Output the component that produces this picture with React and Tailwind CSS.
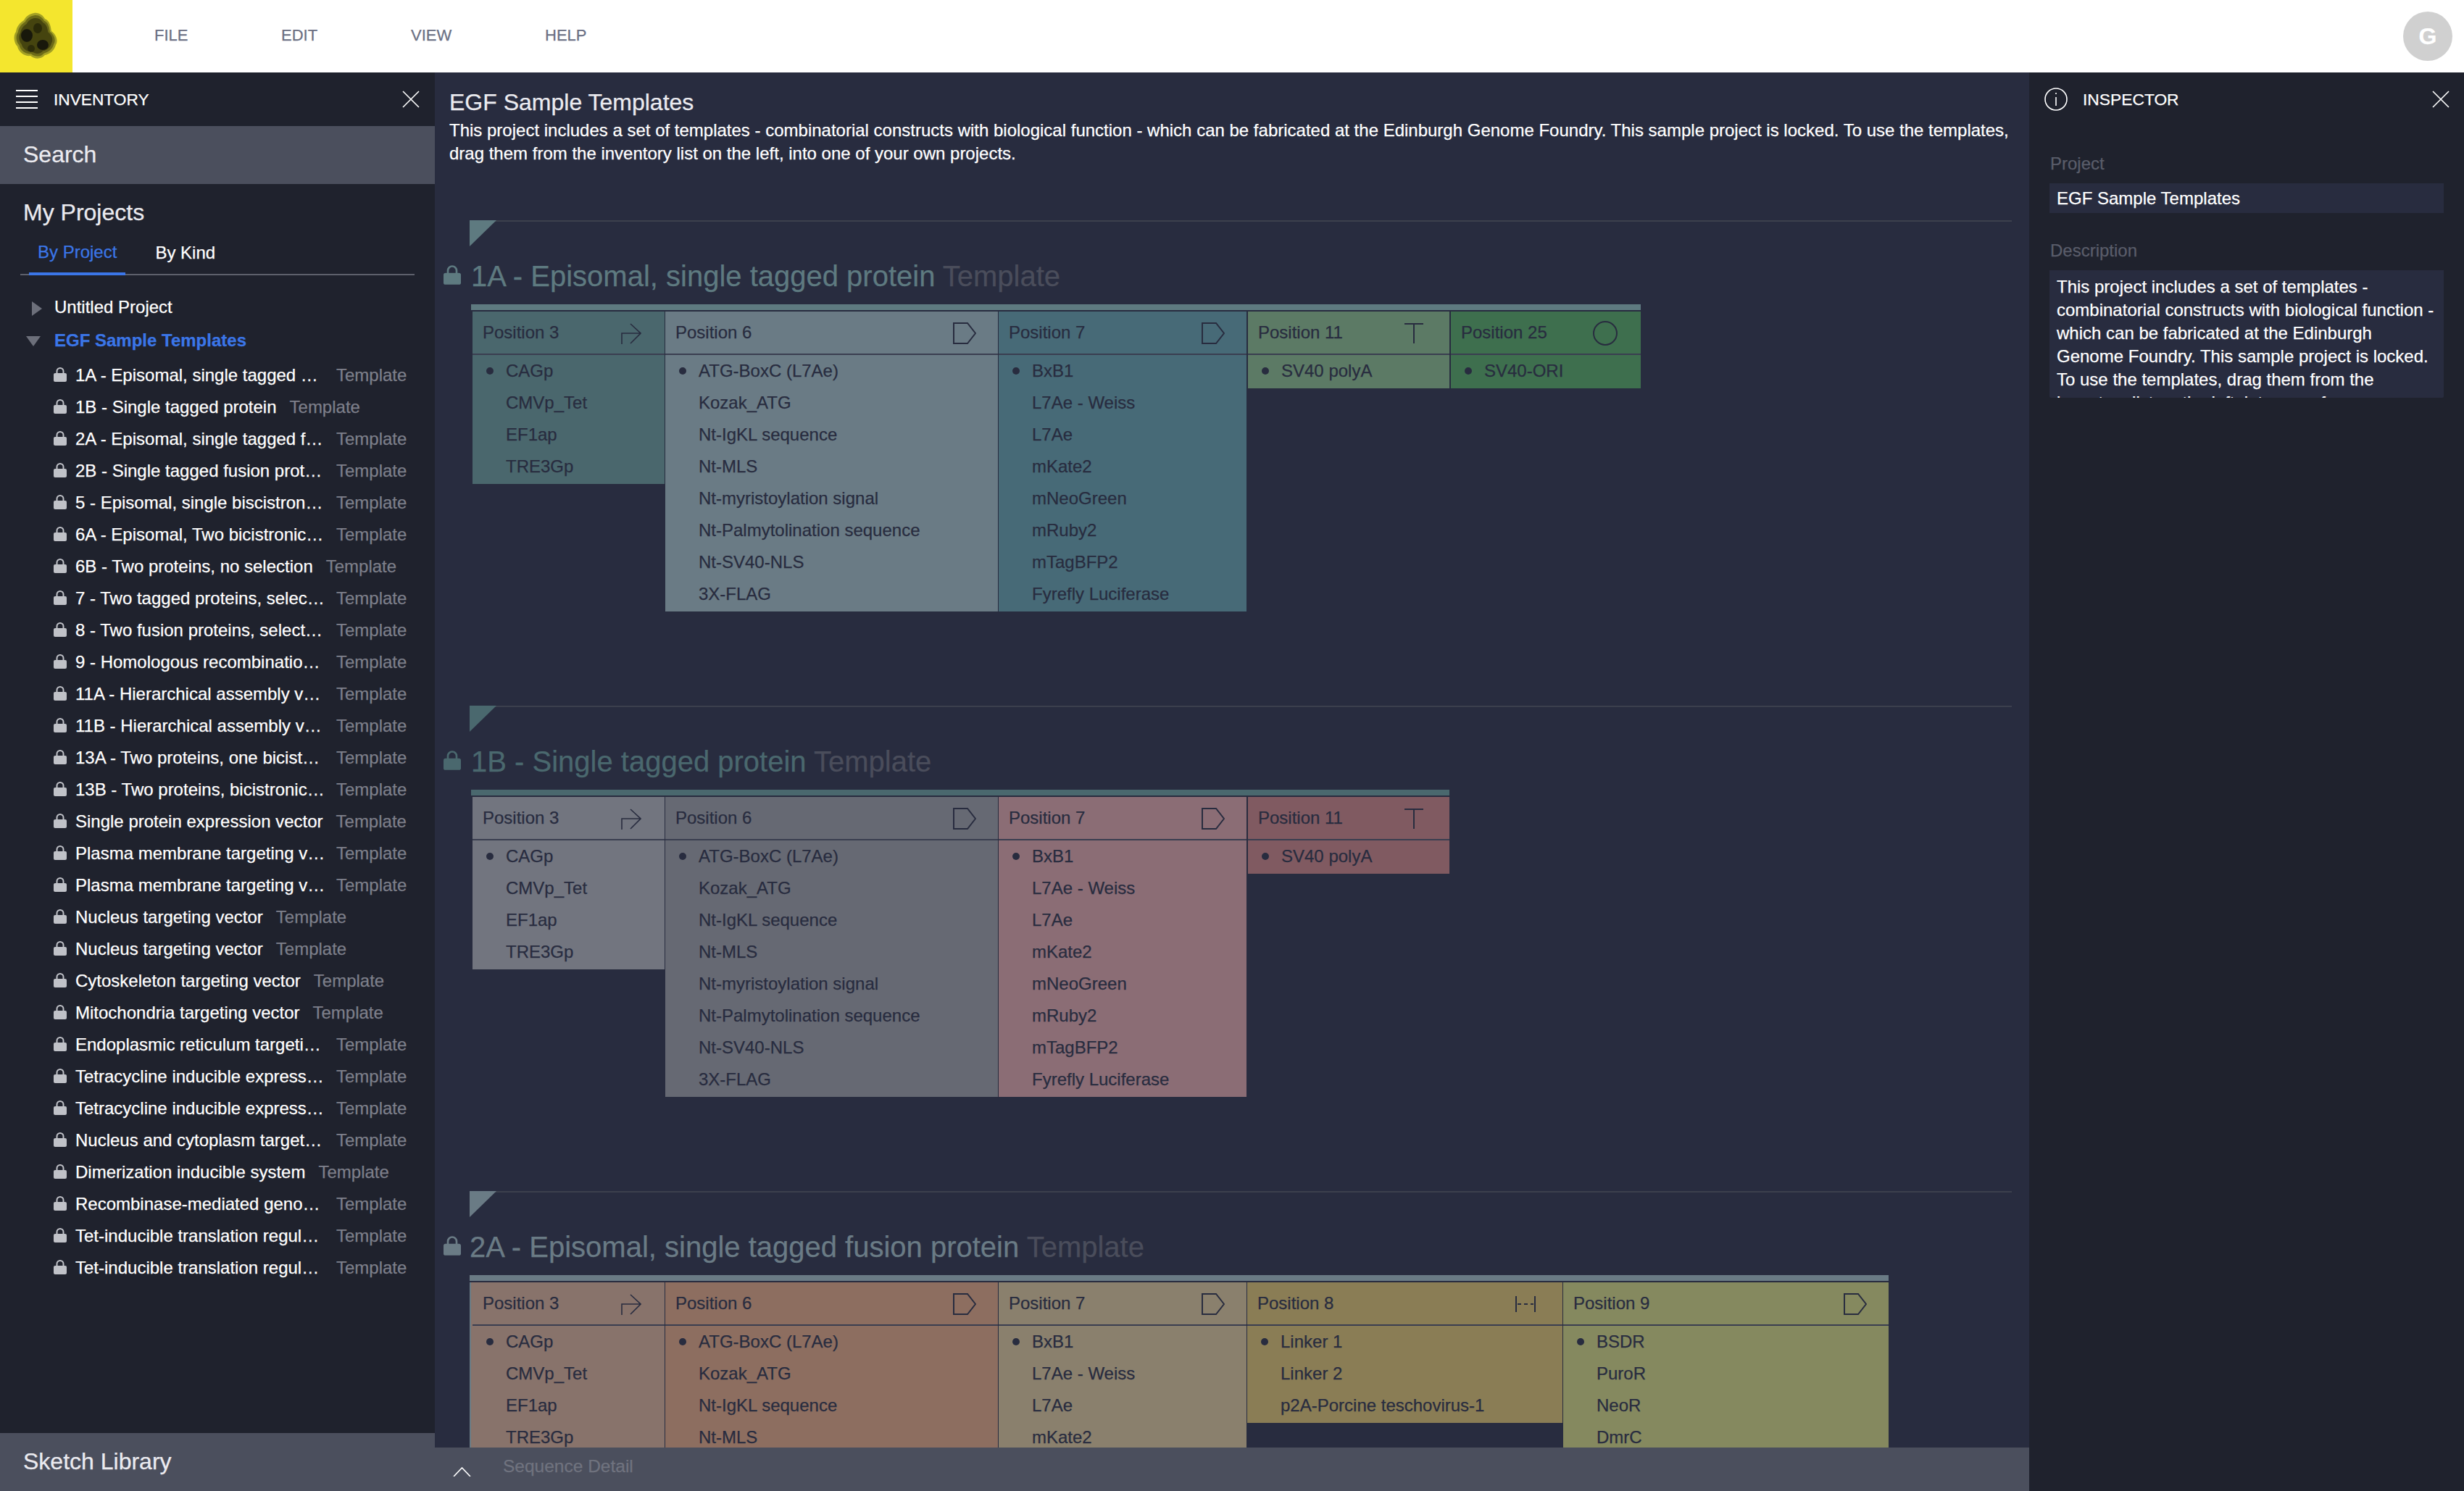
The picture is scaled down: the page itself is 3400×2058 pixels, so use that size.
import React from 'react';

const font = { fontFamily: '"Liberation Sans", Arial, sans-serif' };

const templates = [
  '1A - Episomal, single tagged …', '1B - Single tagged protein', '2A - Episomal, single tagged f…',
  '2B - Single tagged fusion prot…', '5 - Episomal, single biscistron…', '6A - Episomal, Two bicistronic…',
  '6B - Two proteins, no selection', '7 - Two tagged proteins, selec…', '8 - Two fusion proteins, select…',
  '9 - Homologous recombinatio…', '11A - Hierarchical assembly v…', '11B - Hierarchical assembly v…',
  '13A - Two proteins, one bicist…', '13B - Two proteins, bicistronic…', 'Single protein expression vector',
  'Plasma membrane targeting v…', 'Plasma membrane targeting v…', 'Nucleus targeting vector',
  'Nucleus targeting vector', 'Cytoskeleton targeting vector', 'Mitochondria targeting vector',
  'Endoplasmic reticulum targeti…', 'Tetracycline inducible express…', 'Tetracycline inducible express…',
  'Nucleus and cytoplasm target…', 'Dimerization inducible system', 'Recombinase-mediated geno…',
  'Tet-inducible translation regul…', 'Tet-inducible translation regul…',
];

const P3 = ['CAGp', 'CMVp_Tet', 'EF1ap', 'TRE3Gp'];
const P6 = ['ATG-BoxC (L7Ae)', 'Kozak_ATG', 'Nt-IgKL sequence', 'Nt-MLS', 'Nt-myristoylation signal', 'Nt-Palmytolination sequence', 'Nt-SV40-NLS', '3X-FLAG'];
const P7 = ['BxB1', 'L7Ae - Weiss', 'L7Ae', 'mKate2', 'mNeoGreen', 'mRuby2', 'mTagBFP2', 'Fyrefly Luciferase'];

const blocks = [
  {
    name: '1A - Episomal, single tagged protein', text: 'text-[#5e7a80]', fill: '#5e7a80', bar: 'bg-[#5e7a80]', lockGap: 'mr-[14px]', tableLeft: 'ml-[2px]', rowLeft: 'ml-[2px]',
    cols: [
      { pos: 'Position 3', icon: 'promoter', w: 'w-[265px]', bg: 'bg-[#4a676d]', items: P3 },
      { pos: 'Position 6', icon: 'cds', w: 'w-[459px]', bg: 'bg-[#6a7b85]', items: P6 },
      { pos: 'Position 7', icon: 'cds', w: 'w-[342px]', bg: 'bg-[#476a77]', items: P7 },
      { pos: 'Position 11', icon: 'term', w: 'w-[278px] ml-[1px]', bg: 'bg-[#5c7a65]', items: ['SV40 polyA'] },
      { pos: 'Position 25', icon: 'ori', w: 'w-[262px] ml-[1px]', bg: 'bg-[#3e6f4e]', items: ['SV40-ORI'] },
    ],
  },
  {
    name: '1B - Single tagged protein', text: 'text-[#4a686e]', fill: '#4a686e', bar: 'bg-[#4a686e]', lockGap: 'mr-[14px]', tableLeft: 'ml-[2px]', rowLeft: 'ml-[2px]',
    cols: [
      { pos: 'Position 3', icon: 'promoter', w: 'w-[265px]', bg: 'bg-[#72757f]', items: P3 },
      { pos: 'Position 6', icon: 'cds', w: 'w-[459px]', bg: 'bg-[#666973]', items: P6 },
      { pos: 'Position 7', icon: 'cds', w: 'w-[342px]', bg: 'bg-[#8b6d75]', items: P7 },
      { pos: 'Position 11', icon: 'term', w: 'w-[278px] ml-[1px]', bg: 'bg-[#805a61]', items: ['SV40 polyA'] },
    ],
  },
  {
    name: '2A - Episomal, single tagged fusion protein', text: 'text-[#6a7b85]', fill: '#6a7b85', bar: 'bg-[#6a7b85]', lockGap: 'mr-[12px]', tableLeft: 'ml-0', rowLeft: 'border-l-2 border-[#6a7b85]',
    cols: [
      { pos: 'Position 3', icon: 'promoter', w: 'w-[267px] border-l-2 border-[#88736b]', bg: 'bg-[#88736b]', items: P3 },
      { pos: 'Position 6', icon: 'cds', w: 'w-[459px]', bg: 'bg-[#8d6e60]', items: P6 },
      { pos: 'Position 7', icon: 'cds', w: 'w-[342px]', bg: 'bg-[#8a806d]', items: P7 },
      { pos: 'Position 8', icon: 'linker', w: 'w-[435px]', bg: 'bg-[#8a7d55]', items: ['Linker 1', 'Linker 2', 'p2A-Porcine teschovirus-1'] },
      { pos: 'Position 9', icon: 'cds', w: 'w-[449px]', bg: 'bg-[#85895f]', items: ['BSDR', 'PuroR', 'NeoR', 'DmrC'] },
    ],
  },
];

function Lock({ className, fill }) {
  return (
    <svg className={className} viewBox="0 0 18 20" fill="none">
      <path d="M4.5 9V5.5a4.5 4.5 0 0 1 9 0V9" stroke={fill} strokeWidth="2" />
      <rect x="0" y="8" width="18" height="12" rx="2" fill={fill} />
    </svg>
  );
}

function CloseX() {
  return (
    <svg className="w-[24px] h-[24px]" viewBox="0 0 24 24" fill="none" stroke="#ffffff" strokeWidth="1.6">
      <path d="M1 1 L23 23 M23 1 L1 23" />
    </svg>
  );
}

function GlyphIcon({ kind }) {
  const s = { stroke: '#282c3f', strokeWidth: 2, fill: 'none' };
  if (kind === 'promoter') {
    return <svg className="w-[28px] h-[29px] mt-[2px]" viewBox="0 0 28 29"><path d="M1 29 V14 H27 M13 1 L27 14 L13 28" {...s} strokeWidth="1.6" /></svg>;
  }
  if (kind === 'cds') {
    return <svg className="w-[32px] h-[30px] mt-[2px]" viewBox="0 0 32 30"><path d="M1 1 H20 L31 15 L20 29 H1 Z" {...s} /></svg>;
  }
  if (kind === 'term') {
    return <svg className="w-[26px] h-[28px] mt-[2px]" viewBox="0 0 26 28"><path d="M0 1 H26 M13 1 V28" {...s} /></svg>;
  }
  if (kind === 'ori') {
    return <svg className="w-[34px] h-[34px] mt-[2px]" viewBox="0 0 34 34"><circle cx="17" cy="17" r="16" {...s} /></svg>;
  }
  return (
    <svg className="w-[28px] h-[22px] mt-[2px]" viewBox="0 0 28 22">
      <path d="M1 0 V22 M27 0 V22" {...s} />
      <path d="M3 11 H25" {...s} strokeDasharray="5 4" />
    </svg>
  );
}

const iconPad = { promoter: 'pr-[32px]', cds: 'pr-[30px]', term: 'pr-[36px]', ori: 'pr-[32px]', linker: 'pr-[37px]' };

function Column({ col }) {
  return (
    <div className={`${col.w} self-start flex flex-col gap-[2px] bg-[#3a3e50] text-[24px] text-[#282c3f]`}>
      <div className={`${col.bg} ${iconPad[col.icon]} h-[58px] pl-[14px] flex items-center justify-between`}>
        <span>{col.pos}</span>
        <GlyphIcon kind={col.icon} />
      </div>
      <div className={`${col.bg} pb-[2px]`}>
        {col.items.map((item, i) => (
          <div key={item} className="h-[44px] flex items-center pl-[19px]">
            <span className={`w-[10px] h-[10px] rounded-full mr-[17px] ${i === 0 ? 'bg-[#282c3f]' : ''}`} />
            <span className="whitespace-nowrap">{item}</span>
          </div>
        ))}
      </div>
    </div>
  );
}

function Block({ b }) {
  return (
    <div className="h-[670px] shrink-0">
      <div className="h-[36px] flex items-start border-t-2 border-[#3c404d]">
        <svg className="w-[37px] h-[36px] -mt-[2px]" viewBox="0 0 37 36"><path d="M0 0 H37 L0 36 Z" fill={b.fill} /></svg>
      </div>
      <div className="mt-[17px] h-[48px] flex items-center -ml-[36px]">
        <Lock className={`w-[24px] h-[27px] -mt-[4px] ${b.lockGap}`} fill={b.fill} />
        <span className={`text-[40px] whitespace-nowrap ${b.text}`}>
          {b.name} <span className="text-[#4a4d5b]">Template</span>
        </span>
      </div>
      <div className={`mt-[15px] w-fit flex flex-col ${b.tableLeft}`}>
        <div className={`h-[8px] mb-[2px] ${b.bar}`} />
        <div className={`flex gap-[1px] ${b.rowLeft}`}>
          {b.cols.map((c) => <Column key={c.pos} col={c} />)}
        </div>
      </div>
    </div>
  );
}

function Logo() {
  const outer = 'M30 1 C37 0 42 4 45 9 C52 12 53 20 54 26 C60 30 64 39 60 45 C58 53 51 58 45 59 C40 65 31 65 25 60 C18 61 9 56 7 47 C2 42 1 32 5 27 C6 19 11 14 16 11 C19 5 24 2 30 1 Z';
  return (
    <div className="w-[100px] h-[100px] bg-[#f4e62e] flex items-center justify-center shrink-0">
      <svg className="w-[66px] h-[66px]" viewBox="0 0 66 66">
        <path d={outer} fill="#a3a024" />
        <path d={outer} fill="#6c6a18" transform="translate(3.3 3.3) scale(0.9)" />
        <path d={outer} fill="#45440f" transform="translate(7.3 7.3) scale(0.78)" />
        <ellipse cx="20" cy="32" rx="8" ry="9" fill="#11110a" opacity="0.85" />
        <ellipse cx="42" cy="45" rx="8" ry="7" fill="#11110a" opacity="0.85" />
        <ellipse cx="35" cy="22" rx="6" ry="7" fill="#222208" opacity="0.75" />
        <ellipse cx="26" cy="50" rx="5" ry="5" fill="#222208" opacity="0.7" />
      </svg>
    </div>
  );
}

export default function App() {
  return (
    <div style={font} className="w-[3400px] h-[2058px] flex flex-col overflow-hidden bg-[#282c3f] [-webkit-text-stroke:0.25px]">
      <header className="h-[100px] bg-white flex items-center shrink-0">
        <Logo />
        <nav className="flex text-[22px] text-[#6b7084] -mt-[4px]">
          <span className="ml-[113px] w-[175px]">FILE</span>
          <span className="w-[179px]">EDIT</span>
          <span className="w-[185px]">VIEW</span>
          <span>HELP</span>
        </nav>
        <div className="ml-auto mr-[16px] w-[68px] h-[68px] rounded-full bg-[#d0d0d0] text-white font-bold text-[32px] flex items-center justify-center">G</div>
      </header>

      <div className="flex-1 flex min-h-0">
        <aside className="w-[600px] shrink-0 bg-[#1f222d] flex flex-col text-white">
          <div className="h-[74px] flex items-center pl-[22px] pr-[21px]">
            <svg className="w-[30px] h-[28px]" viewBox="0 0 30 28" stroke="#ffffff" strokeWidth="2"><path d="M0 2 H30 M0 10 H30 M0 18 H30 M0 26 H30" /></svg>
            <span className="ml-[22px] text-[22.7px]">INVENTORY</span>
            <span className="ml-auto"><CloseX /></span>
          </div>
          <div className="h-[80px] bg-[#4b4f5d] flex items-center pl-[32px] pb-[3px] text-[32px] text-[#ebebf0]">Search</div>
          <div className="pl-[32px] pt-[20px] text-[32px] leading-[38px] text-[#ebebf0]">My Projects</div>
          <div className="mx-[28px] mt-[8px] h-[60px] flex border-b-2 border-[#5d606b] text-[24px]">
            <div className="ml-[12px] h-[60px] px-[12px] flex items-center border-b-4 border-[#3b76e8] text-[#3b76e8]">By Project</div>
            <div className="ml-[29px] h-[58px] px-[12px] flex items-center">By Kind</div>
          </div>
          <div className="mt-[21px] text-[24px]">
            <div className="h-[46px] flex items-center">
              <svg className="ml-[44px] w-[14px] h-[20px] mt-[4px]" viewBox="0 0 14 20"><path d="M0 0 L14 10 L0 20 Z" fill="#6c6f7a" /></svg>
              <span className="ml-[17px]">Untitled Project</span>
            </div>
            <div className="h-[46px] flex items-center">
              <svg className="ml-[36px] w-[20px] h-[14px] mt-[2px]" viewBox="0 0 20 14"><path d="M0 0 H20 L10 14 Z" fill="#6c6f7a" /></svg>
              <span className="ml-[19px] font-bold text-[#3b76e8]">EGF Sample Templates</span>
            </div>
            <div className="mt-[3px]">
              {templates.map((t, i) => (
                <div key={i} className="h-[44px] flex items-center pl-[74px]">
                  <Lock className="w-[18px] h-[20px] mr-[12px] -mt-[3px] shrink-0" fill="#c0c2c8" />
                  <span className={`whitespace-nowrap ${t.endsWith('…') ? 'w-[342px]' : ''}`}>{t}</span>
                  <span className="ml-[18px] text-[#7d7f8a]">Template</span>
                </div>
              ))}
            </div>
          </div>
          <div className="mt-auto h-[80px] bg-[#4b4f5d] flex items-center pl-[32px] pb-[3px] text-[32px] text-[#ebebf0]">Sketch Library</div>
        </aside>

        <main className="flex-1 min-w-0 flex flex-col">
          <div className="flex-1 min-h-0 overflow-hidden">
            <div className="pl-[20px] pt-[21px]">
              <h1 className="text-[32px] leading-[40px] text-[#ebebf0]">EGF Sample Templates</h1>
              <p className="mt-[3px] w-[2170px] text-[24px] leading-[32px] text-white">
                This project includes a set of templates - combinatorial constructs with biological function - which can be fabricated at the Edinburgh Genome Foundry. This sample project is locked. To use the templates, drag them from the inventory list on the left, into one of your own projects.
              </p>
            </div>
            <div className="mt-[76px] ml-[48px] mr-[24px] flex flex-col">
              {blocks.map((b) => <Block key={b.name} b={b} />)}
            </div>
          </div>
          <div className="h-[60px] bg-[#4b4f5d] flex items-center pl-[25px] shrink-0">
            <svg className="w-[25px] h-[13px] mt-[6px]" viewBox="0 0 25 13" fill="none" stroke="#ffffff" strokeWidth="1.6"><path d="M1 13 L12.5 1 L24 13" /></svg>
            <span className="ml-[44px] text-[24.5px] text-[#70737f] -mt-[7px]">Sequence Detail</span>
          </div>
        </main>

        <aside className="w-[600px] shrink-0 bg-[#1f222d] text-white flex flex-col">
          <div className="h-[74px] flex items-center pl-[21px] pr-[20px]">
            <svg className="w-[32px] h-[32px]" viewBox="0 0 32 32" fill="none" stroke="#ffffff" strokeWidth="1.6">
              <circle cx="16" cy="16" r="15" />
              <path d="M16 13 V25" />
              <path d="M16 7 V9" />
            </svg>
            <span className="ml-[21px] text-[22.8px]">INSPECTOR</span>
            <span className="ml-auto"><CloseX /></span>
          </div>
          <div className="px-[28px] text-[24px]">
            <div className="mt-[34px] h-[36px] leading-[36px] pl-[1px] text-[#5a5d6a]">Project</div>
            <div className="mt-[9px] h-[41px] bg-[#282c3f] pl-[10px] flex items-center">EGF Sample Templates</div>
            <div className="mt-[34px] h-[36px] leading-[36px] pl-[1px] text-[#5a5d6a]">Description</div>
            <div className="mt-[9px] h-[176px] bg-[#282c3f] pl-[10px] pr-[10px] pt-[7px] leading-[32px] overflow-hidden rounded-b-[2px]">
              This project includes a set of templates - combinatorial constructs with biological function - which can be fabricated at the Edinburgh Genome Foundry. This sample project is locked. To use the templates, drag them from the inventory list on the left, into one of your own projects.
            </div>
          </div>
        </aside>
      </div>
    </div>
  );
}
